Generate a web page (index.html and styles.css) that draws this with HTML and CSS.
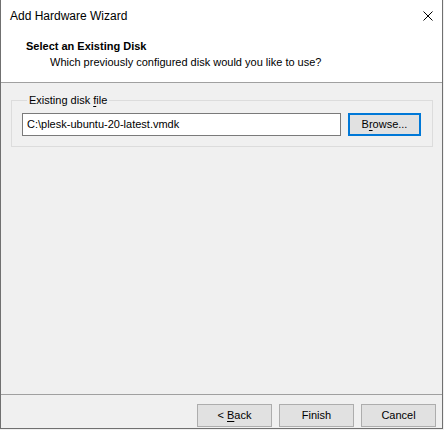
FILE: index.html
```html
<!DOCTYPE html>
<html>
<head>
<meta charset="utf-8">
<link rel="stylesheet" href="styles.css">
</head>
<body>
<div class="window">
  <div class="titlebar">
    <span class="title">Add Hardware Wizard</span>
    <svg class="close" width="10" height="10" viewBox="0 0 10 10"><path d="M0.5 0.5 L9.5 9.5 M9.5 0.5 L0.5 9.5" stroke="#000" stroke-width="1" fill="none"/></svg>
  </div>
  <div class="header">
    <div class="h-title">Select an Existing Disk</div>
    <div class="h-sub">Which previously configured disk would you like to use?</div>
  </div>
  <div class="body">
    <fieldset class="group">
      <legend class="legend">Existing disk <u>f</u>ile</legend>
      <div class="row">
        <div class="input">C:\plesk-ubuntu-20-latest.vmdk</div>
        <div class="btn btn-focus">B<u>r</u>owse...</div>
      </div>
    </fieldset>
  </div>
  <div class="footer">
    <div class="btn">&lt; <u>B</u>ack</div>
    <div class="btn">Finish</div>
    <div class="btn">Cancel</div>
  </div>
</div>
</body>
</html>
```
FILE: styles.css
```css
html, body { margin: 0; padding: 0; background: #f0f0f0; }
body { font-family: "Liberation Sans", Arial, sans-serif; font-size: 11px; color: #000; }
.window {
  width: 441px; height: 428px;
  border: 1px solid #707070; border-top: none;
  background: #f0f0f0;
  display: flex; flex-direction: column;
}
.titlebar {
  height: 31px; background: #fff;
  display: flex; align-items: center; justify-content: space-between;
  padding: 0 9px 0 9px;
}
.title { font-size: 12px; line-height: 16px; }
.header {
  background: #fff; height: 51px;
  border-bottom: 1px solid #a0a0a0;
}
.h-title { font-weight: bold; padding-left: 25px; margin-top: 7px; line-height: 16px; }
.h-sub { padding-left: 49px; line-height: 16px; color: #000; }
.body { flex: 1; padding: 9px 9px 0 10px; }
.group {
  margin: 0; padding: 5px 10px 10px 10px;
  border: 1px solid #dcdcdc;
}
.legend { padding: 0 2px; margin-left: 5px; line-height: 16px; }
.row { display: flex; gap: 7px; align-items: center; }
.input {
  height: 21px; line-height: 21px;
  background: #fff; border: 1px solid #7a7a7a;
  padding-left: 4px; width: 313px;
}
.btn {
  width: 73px; height: 21px; line-height: 21px; text-align: center;
  background: #e1e1e1; border: 1px solid #adadad;
}
.btn-focus { border: 2px solid #0078d7; width: 69px; height: 19px; line-height: 19px; }
.footer {
  height: 34px; border-top: 1px solid #a0a0a0;
  display: flex; justify-content: flex-end; gap: 7px;
  padding: 9px 6px 0 0;
  box-sizing: border-box;
}
u { text-decoration: underline; text-underline-offset: 2px; }
```
